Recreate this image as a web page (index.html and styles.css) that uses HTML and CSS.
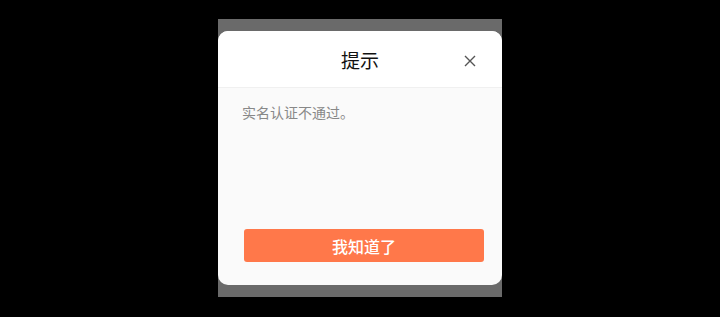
FILE: index.html
```html
<!DOCTYPE html>
<html lang="zh-CN">
<head>
    <meta charset="UTF-8">
    <meta name="viewport" content="width=device-width, initial-scale=1.0">
    <title>提示</title>
    <link rel="stylesheet" href="styles.css">
</head>
<body>
    <div class="mask">
        <div class="dialog">
            <div class="dialog-header">
                <div class="title">提示</div>
                <div class="close">
                    <svg width="12" height="12" viewBox="0 0 12 12">
                        <path d="M1 1 L11 11 M11 1 L1 11" stroke="#555" stroke-width="1.4" fill="none"/>
                    </svg>
                </div>
            </div>
            <div class="dialog-body">
                <div class="message">实名认证不通过。</div>
                <div class="btn">我知道了</div>
            </div>
        </div>
    </div>
</body>
</html>
```

FILE: styles.css
```css
html, body{
    margin: 0;
    height: 100%;
    background: #000;
}

body{
    font-family: "Noto Sans CJK SC", "Noto Sans", sans-serif;
    padding-top: 19px;
    box-sizing: border-box;
}

.mask{
    width: 284px;
    height: 278px;
    margin: 0 auto;
    padding: 12px 0;
    box-sizing: border-box;
    background: #6a6a6a;
}

.dialog{
    height: 254px;
    border-radius: 10px;
    overflow: hidden;
    display: flex;
    flex-direction: column;
    background: #fafafa;
}

.dialog-header{
    position: relative;
    height: 57px;
    flex-shrink: 0;
    display: flex;
    align-items: center;
    justify-content: center;
    background: #fff;
    border-bottom: 1px solid #f0f0f0;
    box-sizing: border-box;
}

.title{
    font-size: 19px;
    color: #111;
    margin-top: 1px;
}

.close{
    position: absolute;
    right: 26px;
    top: 24px;
    width: 12px;
    height: 12px;
    display: flex;
}

.dialog-body{
    flex: 1;
    display: flex;
    flex-direction: column;
    padding: 14px 18px 23px 24px;
}

.message{
    font-size: 14px;
    color: #888;
    line-height: 20px;
}

.btn{
    margin-top: auto;
    margin-left: 2px;
    height: 33px;
    border-radius: 3px;
    background: #ff784a;
    color: #fff;
    font-size: 16px;
    font-weight: 500;
    display: flex;
    align-items: center;
    justify-content: center;
}
```
